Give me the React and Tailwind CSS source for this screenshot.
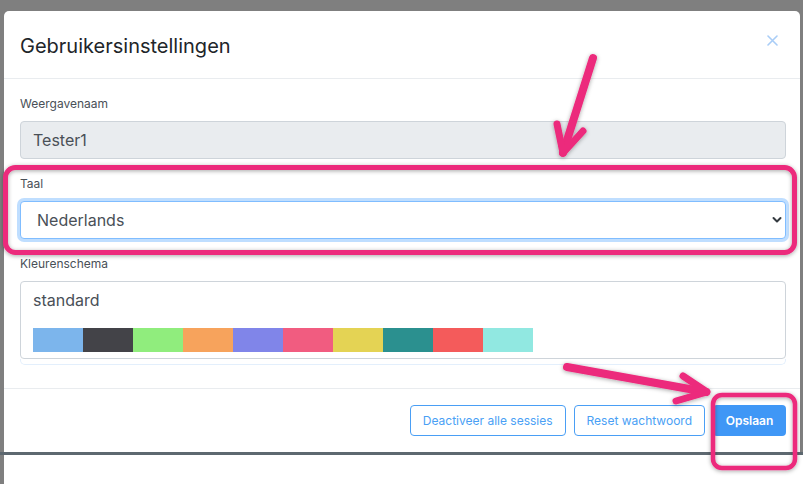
import React from 'react';

const swatches = [
  '#7cb5ec',
  '#434348',
  '#90ed7d',
  '#f7a35c',
  '#8085e9',
  '#f15c80',
  '#e4d354',
  '#2b908f',
  '#f45b5b',
  '#91e8e1',
];

const Annotations = () => {
  const pink = '#ec2a7b';
  return (
    <svg className="absolute inset-0 pointer-events-none" width="803" height="484" viewBox="0 0 803 484">
      <defs>
        <filter id="shadow" x="-10%" y="-10%" width="120%" height="130%">
          <feDropShadow dx="0" dy="1" stdDeviation="2" floodColor="#000" floodOpacity="0.35" />
        </filter>
      </defs>
      <g filter="url(#shadow)" fill="none" stroke={pink} strokeLinecap="round" strokeLinejoin="round">
        {/* Kader rond Taal */}
        <rect x="5.5" y="167.5" width="789" height="85" rx="10" strokeWidth="5" />
        {/* Pijl naar de taal-select */}
        <path d="M593 58 L563 153" strokeWidth="8" />
        <path d="M557 124 L563 153 L583 131" strokeWidth="7" />
        {/* Pijl naar Opslaan */}
        <path d="M567 367 L706 392" strokeWidth="8" />
        <path d="M683 376 L707 392 L676 401" strokeWidth="7" />
        {/* Kader rond Opslaan */}
        <rect x="713" y="395" width="82" height="73" rx="9" strokeWidth="4.5" />
      </g>
    </svg>
  );
};

const Label = ({ children }) => (
  <div className="text-[12px] leading-[18px] text-[#495057] mb-[8px]">{children}</div>
);

export default function App() {
  return (
    <div className="relative w-[803px] h-[484px] overflow-hidden bg-[#7f7f7f] font-['Inter',sans-serif]">
      <div className="pl-[4px] pt-[11px] pr-[3px]">
        <div className="w-[796px] h-[441px] bg-white rounded-t-[5px] flex flex-col">
          {/* Header */}
          <div className="h-[68px] flex items-center justify-between pl-[16px] pr-[22px] border-b border-[#e9ecef]">
            <h5 className="text-[20px] leading-[24px] text-[#212529] mt-[2px]">Gebruikersinstellingen</h5>
            <svg width="11" height="11" viewBox="0 0 11 11" className="mb-[8px]">
              <path d="M1 1 L10 10 M10 1 L1 10" stroke="#a9cdf7" strokeWidth="1.6" strokeLinecap="round" />
            </svg>
          </div>

          {/* Body */}
          <div className="pl-[16px] pr-[14px] pt-[16px] flex-1">
            <Label>Weergavenaam</Label>
            <div className="h-[38px] bg-[#e9ecef] border border-[#ced4da] rounded-[4px] flex items-center px-[12px] text-[16px] text-[#495057] mb-[16px]">
              Tester1
            </div>

            <Label>Taal</Label>
            <div className="h-[38px] bg-white border border-[#80bdff] rounded-[4px] shadow-[0_0_0_3px_rgba(0,123,255,0.25)] flex items-center justify-between pl-[16px] pr-[3px] text-[16px] text-[#495057] mb-[16px]">
              <span>Nederlands</span>
              <svg width="10" height="8" viewBox="0 0 10 8">
                <path d="M1.5 2 L5 5.5 L8.5 2" fill="none" stroke="#343a40" strokeWidth="2" strokeLinecap="round" strokeLinejoin="round" />
              </svg>
            </div>

            <Label>Kleurenschema</Label>
            <div className="border border-[#ced4da] rounded-[4px] pt-[6px] pb-[6px] px-[12px]">
              <div className="text-[16px] leading-[24px] text-[#495057]">standard</div>
              <div className="flex mt-[16px]">
                {swatches.map((c) => (
                  <div key={c} className="w-[50px] h-[24px]" style={{ backgroundColor: c }} />
                ))}
              </div>
            </div>
            <div className="h-[6px] border-x border-b border-[#e3effc] rounded-b-[5px]" />
          </div>

          {/* Footer */}
          <div className="h-[64px] border-t border-[#e9ecef] flex items-center justify-end gap-[8px] pr-[14px]">
            <button className="h-[31px] px-[12px] rounded-[4px] border border-[#4a9ff5] text-[#4a9ff5] text-[12px] bg-white">
              Deactiveer alle sessies
            </button>
            <button className="h-[31px] px-[12px] rounded-[4px] border border-[#4a9ff5] text-[#4a9ff5] text-[12px] bg-white">
              Reset wachtwoord
            </button>
            <button className="h-[31px] w-[73px] rounded-[4px] bg-[#3f97f6] text-white text-[12px] font-semibold">
              Opslaan
            </button>
          </div>
        </div>
      </div>
      <div className="h-[3px] bg-[#5d6870]" />
      <div className="ml-[4px] h-[29px] bg-white" />

      <Annotations />
    </div>
  );
}
